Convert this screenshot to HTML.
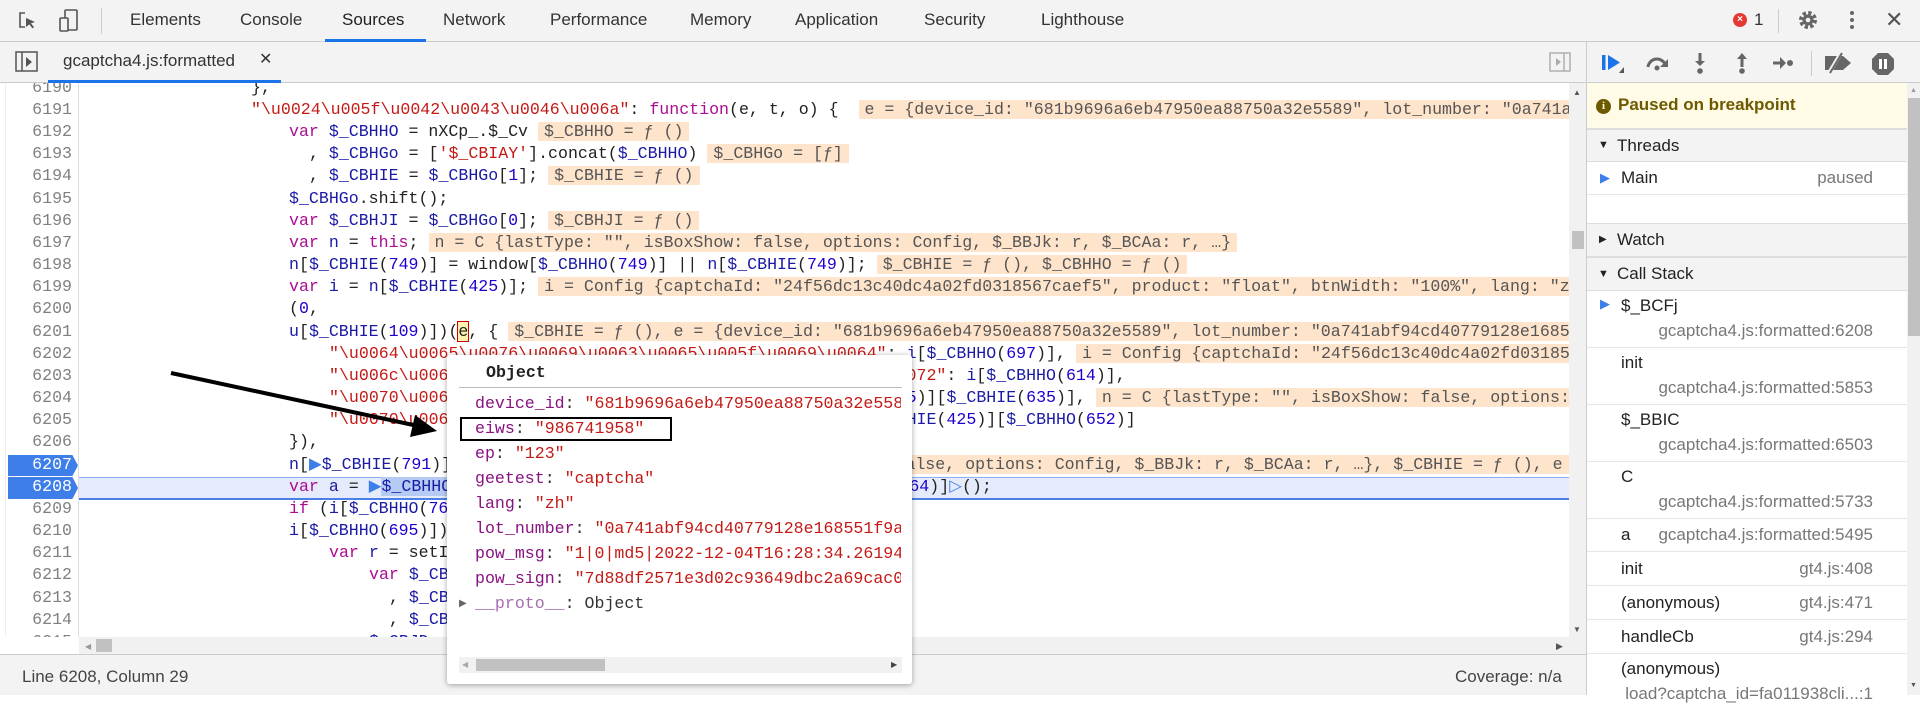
<!DOCTYPE html>
<html><head><meta charset="utf-8">
<style>
*{margin:0;padding:0;box-sizing:border-box}
body{width:1920px;height:695px;overflow:hidden;background:#fff;font-family:"Liberation Sans",sans-serif;position:relative;color:#333}
.abs{position:absolute}
.top{left:0;top:0;width:1920px;height:42px;background:#f3f3f3;border-bottom:1px solid #ccc}
.tab{position:absolute;top:10px;font-size:17px;color:#333}
.ftb{left:0;top:42px;width:1586px;height:41px;background:#f3f3f3;border-bottom:1px solid #ccc}
.mono{font-family:"Liberation Mono",monospace;font-size:16.6px}
.ln{position:absolute;left:0;width:72px;text-align:right;color:#808080;height:22px;line-height:22px}
.cl{position:absolute;white-space:pre;height:22px;line-height:22px;color:#222}
.k{color:#aa0d91}.s{color:#c41a16}.v{color:#1a1aa6}.n{color:#1c00cf}
.iv{background:#ffe4cc;color:#555;padding:0 6px;margin-left:10px}
.side{left:1586px;top:42px;width:334px;height:653px;background:#fff;border-left:1px solid #ccc}
.sh{position:absolute;left:0;width:320px;background:#f3f3f3;border-top:1px solid #ddd;border-bottom:1px solid #ddd;font-size:17px;color:#222;padding-left:30px}
.row{position:absolute;left:0;width:320px;border-bottom:1px solid #e6e6e6;font-size:17px;color:#222}
.sub{color:#777;position:absolute;right:34px}
.pk{color:#881280}.pv{color:#c41a16}
.pr{position:absolute;left:28px;white-space:pre;height:25px;line-height:25px;width:426px;overflow:hidden}
</style></head><body>

<div class="abs top">
 <svg class="abs" style="left:17px;top:10px" width="22" height="22" viewBox="0 0 22 22"><path d="M8 3H3v14h5" fill="none" stroke="#555" stroke-width="1.6"/><path d="M9 8l9 4-4 1.2 3 4-1.6 1.2-3-4L9 17z" fill="#555"/></svg>
 <svg class="abs" style="left:58px;top:8px" width="22" height="26" viewBox="0 0 22 26"><rect x="7" y="2" width="12" height="20" rx="1" fill="none" stroke="#555" stroke-width="1.6"/><rect x="2" y="10" width="8" height="13" rx="1" fill="#f3f3f3" stroke="#555" stroke-width="1.6"/></svg>
 <div class="abs" style="left:101px;top:8px;width:1px;height:26px;background:#ccc"></div>
 <div class="tab" style="left:130px">Elements</div>
 <div class="tab" style="left:240px">Console</div>
 <div class="tab" style="left:342px;color:#222">Sources</div>
 <div class="abs" style="left:325px;top:39px;width:101px;height:3px;background:#1a73e8"></div>
 <div class="tab" style="left:443px">Network</div>
 <div class="tab" style="left:550px">Performance</div>
 <div class="tab" style="left:690px">Memory</div>
 <div class="tab" style="left:795px">Application</div>
 <div class="tab" style="left:924px">Security</div>
 <div class="tab" style="left:1041px">Lighthouse</div>
 <div class="abs" style="left:1733px;top:13px;width:14px;height:14px;border-radius:50%;background:#e53935;color:#fff;font-size:10px;line-height:14px;text-align:center;font-weight:bold">×</div>
 <div class="tab" style="left:1754px">1</div>
 <div class="abs" style="left:1778px;top:9px;width:1px;height:24px;background:#ccc"></div>
 <svg class="abs" style="left:1797px;top:9px" width="22" height="22" viewBox="0 0 22 22"><circle cx="11" cy="11" r="7" fill="none" stroke="#666" stroke-width="4" stroke-dasharray="3.2 2.3"/><circle cx="11" cy="11" r="5.5" fill="#666"/><circle cx="11" cy="11" r="2.3" fill="#f3f3f3"/></svg>
 <div class="abs" style="left:1850px;top:11px;width:4px;height:4px;border-radius:50%;background:#666;box-shadow:0 7px 0 #666,0 14px 0 #666"></div>
 <div class="abs" style="left:1885px;top:7px;font-size:22px;color:#555">✕</div>
</div>

<div class="abs ftb">
 <svg class="abs" style="left:15px;top:9px" width="24" height="22" viewBox="0 0 24 22"><rect x="1" y="1" width="21" height="19" fill="none" stroke="#555" stroke-width="1.5"/><line x1="7" y1="1" x2="7" y2="20" stroke="#555" stroke-width="1.5"/><path d="M11 6l6 5-6 5z" fill="#555"/></svg>
 <div class="abs" style="left:63px;top:9px;font-size:17px;color:#333">gcaptcha4.js:formatted</div>
 <div class="abs" style="left:259px;top:7px;font-size:16px;color:#333">✕</div>
 <div class="abs" style="left:48px;top:38px;width:233px;height:3px;background:#1a73e8"></div>
 <svg class="abs" style="left:1549px;top:10px" width="22" height="20" viewBox="0 0 22 20"><rect x="1" y="1" width="20" height="18" fill="none" stroke="#aaa" stroke-width="1.4"/><line x1="15" y1="1" x2="15" y2="19" stroke="#aaa" stroke-width="1.4"/><path d="M7 6l5 4-5 4z" fill="#aaa"/></svg>
</div>

<div class="abs mono" style="left:0;top:83px;width:1569px;height:554px;overflow:hidden;background:#fff">
 <div class="abs" style="left:78px;top:0;width:1px;height:554px;background:#ddd"></div>
 <div class="abs" style="left:0;top:0;width:6px;height:554px;background:#fff;border-right:1px solid #eee"></div>
 <div class="abs" style="left:79px;top:394px;width:1490px;height:23px;background:#e5ebfb;border-top:1px solid #8ab0f0;border-bottom:2px solid #4a7fe8"></div>
 <div class="abs" style="left:8px;top:372px;width:70px;height:21px;background:#3d7ee8;clip-path:polygon(0 0,92% 0,100% 50%,92% 100%,0 100%)"></div>
 <div class="abs" style="left:8px;top:394px;width:70px;height:22px;background:#3d7ee8;clip-path:polygon(0 0,92% 0,100% 50%,92% 100%,0 100%)"></div>
 <div style="position:absolute;left:0;top:-6.3px">
  <div class="ln" style="top:0">6190</div>
  <div class="ln" style="top:22.17px">6191</div>
  <div class="ln" style="top:44.34px">6192</div>
  <div class="ln" style="top:66.51px">6193</div>
  <div class="ln" style="top:88.68px">6194</div>
  <div class="ln" style="top:110.85px">6195</div>
  <div class="ln" style="top:133.02px">6196</div>
  <div class="ln" style="top:155.19px">6197</div>
  <div class="ln" style="top:177.36px">6198</div>
  <div class="ln" style="top:199.53px">6199</div>
  <div class="ln" style="top:221.7px">6200</div>
  <div class="ln" style="top:243.87px">6201</div>
  <div class="ln" style="top:266.04px">6202</div>
  <div class="ln" style="top:288.21px">6203</div>
  <div class="ln" style="top:310.38px">6204</div>
  <div class="ln" style="top:332.55px">6205</div>
  <div class="ln" style="top:354.72px">6206</div>
  <div class="ln" style="top:376.89px;color:#fff">6207</div>
  <div class="ln" style="top:399.06px;color:#fff">6208</div>
  <div class="ln" style="top:421.23px">6209</div>
  <div class="ln" style="top:443.4px">6210</div>
  <div class="ln" style="top:465.57px">6211</div>
  <div class="ln" style="top:487.74px">6212</div>
  <div class="ln" style="top:509.91px">6213</div>
  <div class="ln" style="top:532.08px">6214</div>
  <div class="ln" style="top:554.25px">6215</div>

  <div class="cl" style="top:0;left:251px">},</div>
  <div class="cl" style="top:22.17px;left:251px"><span class="s">"\u0024\u005f\u0042\u0043\u0046\u006a"</span>: <span class="k">function</span>(e, t, o) { <span class="iv">e = {device_id: "681b9696a6eb47950ea88750a32e5589", lot_number: "0a741abf94cd40779128e168551f9"</span></div>
  <div class="cl" style="top:44.34px;left:289px"><span class="k">var</span> <span class="v">$_CBHHO</span> = nXCp_.$_Cv<span class="iv">$_CBHHO = ƒ ()</span></div>
  <div class="cl" style="top:66.51px;left:309px">, <span class="v">$_CBHGo</span> = [<span class="s">'$_CBIAY'</span>].concat(<span class="v">$_CBHHO</span>)<span class="iv">$_CBHGo = [ƒ]</span></div>
  <div class="cl" style="top:88.68px;left:309px">, <span class="v">$_CBHIE</span> = <span class="v">$_CBHGo</span>[<span class="n">1</span>];<span class="iv">$_CBHIE = ƒ ()</span></div>
  <div class="cl" style="top:110.85px;left:289px"><span class="v">$_CBHGo</span>.shift();</div>
  <div class="cl" style="top:133.02px;left:289px"><span class="k">var</span> <span class="v">$_CBHJI</span> = <span class="v">$_CBHGo</span>[<span class="n">0</span>];<span class="iv">$_CBHJI = ƒ ()</span></div>
  <div class="cl" style="top:155.19px;left:289px"><span class="k">var</span> <span class="v">n</span> = <span class="k">this</span>;<span class="iv">n = C {lastType: "", isBoxShow: false, options: Config, $_BBJk: r, $_BCAa: r, …}</span></div>
  <div class="cl" style="top:177.36px;left:289px"><span class="v">n</span>[<span class="v">$_CBHIE</span>(<span class="n">749</span>)] = window[<span class="v">$_CBHHO</span>(<span class="n">749</span>)] || <span class="v">n</span>[<span class="v">$_CBHIE</span>(<span class="n">749</span>)];<span class="iv">$_CBHIE = ƒ (), $_CBHHO = ƒ ()</span></div>
  <div class="cl" style="top:199.53px;left:289px"><span class="k">var</span> <span class="v">i</span> = <span class="v">n</span>[<span class="v">$_CBHIE</span>(<span class="n">425</span>)];<span class="iv">i = Config {captchaId: "24f56dc13c40dc4a02fd0318567caef5", product: "float", btnWidth: "100%", lang: "zh"</span></div>
  <div class="cl" style="top:221.7px;left:289px">(<span class="n">0</span>,</div>
  <div class="cl" style="top:243.87px;left:289px"><span class="v">u</span>[<span class="v">$_CBHIE</span>(<span class="n">109</span>)])(<span style="background:#fff3b0;outline:1px solid #c00">e</span>, {<span class="iv">$_CBHIE = ƒ (), e = {device_id: "681b9696a6eb47950ea88750a32e5589", lot_number: "0a741abf94cd40779128e168551f9"</span></div>
  <div class="cl" style="top:266.04px;left:329px"><span class="s">"\u0064\u0065\u0076\u0069\u0063\u0065\u005f\u0069\u0064"</span>: <span class="v">i</span>[<span class="v">$_CBHHO</span>(<span class="n">697</span>)],<span class="iv">i = Config {captchaId: "24f56dc13c40dc4a02fd0318567caef5"</span></div>
  <div class="cl" style="top:288.21px;left:329px"><span class="s">"\u006c\u006f\u0074\u005f\u006e\u0075\u006d\u0062\u0065\u0072"</span>: <span class="v">i</span>[<span class="v">$_CBHHO</span>(<span class="n">614</span>)],</div>
  <div class="cl" style="top:310.38px;left:329px"><span class="s">"\u0070\u006f\u0077\u005f\u006d\u0073\u0067"</span>: <span class="v">n</span>[<span class="v">$_CBHIE</span>(<span class="n">425</span>)][<span class="v">$_CBHIE</span>(<span class="n">635</span>)],<span class="iv">n = C {lastType: "", isBoxShow: false, options: Config</span></div>
  <div class="cl" style="top:332.55px;left:329px"><span class="s">"\u0070\u006f\u0077\u005f\u0073\u0069\u0067\u006e"</span>: <span class="v">n</span>[<span class="v">$_CBHIE</span>(<span class="n">425</span>)][<span class="v">$_CBHHO</span>(<span class="n">652</span>)]</div>
  <div class="cl" style="top:354.72px;left:289px">}),</div>
  <div class="cl" style="top:376.89px;left:289px"><span class="v">n</span>[<span style="color:#3d7ee8">▶</span><span class="v">$_CBHIE</span>(<span class="n">791</span>)](<span class="v">i</span>, <span class="v">e</span>);    <span class="iv">n = C {lastType: "", isBoxShow: false, options: Config, $_BBJk: r, $_BCAa: r, …}, $_CBHIE = ƒ (), e = {</span></div>
  <div class="cl" style="top:399.06px;left:289px"><span class="k">var</span> <span class="v">a</span> = <span style="color:#3d7ee8">▶</span><span class="v" style="background:#b6cbf3">$_CBHHO</span>(<span class="n">426</span>)[<span class="v">$_CBHIE</span>(<span class="n">109</span>)](<span class="v">e</span>)[<span class="v">$_CBHIE</span>(<span class="n">425</span>)][<span class="v">$_CBHHO</span>(<span class="n">764</span>)]<span style="color:#3d7ee8">▷</span>();</div>
  <div class="cl" style="top:421.23px;left:289px"><span class="k">if</span> (<span class="v">i</span>[<span class="v">$_CBHHO</span>(<span class="n">768</span>)]) {</div>
  <div class="cl" style="top:443.4px;left:289px"><span class="v">i</span>[<span class="v">$_CBHHO</span>(<span class="n">695</span>)]);</div>
  <div class="cl" style="top:465.57px;left:329px"><span class="k">var</span> <span class="v">r</span> = setInterval(<span class="k">function</span>() {</div>
  <div class="cl" style="top:487.74px;left:369px"><span class="k">var</span> <span class="v">$_CBJA</span></div>
  <div class="cl" style="top:509.91px;left:389px">, <span class="v">$_CBJB</span></div>
  <div class="cl" style="top:532.08px;left:389px">, <span class="v">$_CBJC</span></div>
  <div class="cl" style="top:554.25px;left:369px"><span class="v">$_CBJD</span></div>
 </div>
</div>
<div class="abs" style="left:79px;top:637px;width:1490px;height:17px;background:#f1f1f1"></div>
<div class="abs" style="left:85px;top:642px;font-size:8px;color:#999">◀</div>
<div class="abs" style="left:96px;top:639px;width:16px;height:13px;background:#c1c1c1"></div>
<div class="abs" style="left:1556px;top:641px;font-size:9px;color:#555">▶</div>
<div class="abs" style="left:1569px;top:83px;width:17px;height:571px;background:#f1f1f1"></div>
<div class="abs" style="left:1573px;top:88px;font-size:8px;color:#555">▲</div>
<div class="abs" style="left:1572px;top:231px;width:12px;height:18px;background:#c1c1c1"></div>
<div class="abs" style="left:1573px;top:625px;font-size:8px;color:#555">▼</div>

<div class="abs" style="left:0;top:654px;width:1586px;height:41px;background:#f3f3f3;border-top:1px solid #ccc"></div>
<div class="abs" style="left:22px;top:667px;font-size:17px;color:#444">Line 6208, Column 29</div>
<div class="abs" style="left:1455px;top:667px;font-size:17px;color:#444">Coverage: n/a</div>

<svg class="abs" style="left:0;top:0" width="1920" height="695"><line x1="171" y1="373" x2="418" y2="426" stroke="#000" stroke-width="4"/><path d="M437 431L410 437L415 415Z" fill="#000"/></svg>

<div class="abs mono" style="left:447px;top:355px;width:465px;height:329px;background:#fff;box-shadow:0 1px 6px rgba(0,0,0,.35);border-radius:3px;overflow:hidden">
 <div class="abs" style="left:39px;top:8px;font-weight:bold;color:#222">Object</div>
 <div class="abs" style="left:12px;top:32px;width:443px;height:1px;background:#bbb"></div>
 <div class="pr" style="top:36px"><span class="pk">device_id</span>: <span class="pv">"681b9696a6eb47950ea88750a32e5589"</span></div>
 <div class="pr" style="top:61px"><span class="pk">eiws</span>: <span class="pv">"986741958"</span></div>
 <div class="pr" style="top:86px"><span class="pk">ep</span>: <span class="pv">"123"</span></div>
 <div class="pr" style="top:111px"><span class="pk">geetest</span>: <span class="pv">"captcha"</span></div>
 <div class="pr" style="top:136px"><span class="pk">lang</span>: <span class="pv">"zh"</span></div>
 <div class="pr" style="top:161px"><span class="pk">lot_number</span>: <span class="pv">"0a741abf94cd40779128e168551f9a2b"</span></div>
 <div class="pr" style="top:186px"><span class="pk">pow_msg</span>: <span class="pv">"1|0|md5|2022-12-04T16:28:34.261940+08:00"</span></div>
 <div class="pr" style="top:211px"><span class="pk">pow_sign</span>: <span class="pv">"7d88df2571e3d02c93649dbc2a69cac0"</span></div>
 <div class="pr" style="top:236px"><span style="color:#a56fb0">__proto__</span>: Object</div>
 <div class="abs" style="left:12px;top:243px;font-size:10px;color:#666">▶</div>
 <div class="abs" style="left:13px;top:62px;width:212px;height:24px;border:2px solid #000"></div>
 <div class="abs" style="left:12px;top:302px;width:443px;height:16px;background:#f1f1f1"></div>
 <div class="abs" style="left:15px;top:305px;font-size:8px;color:#aaa">◀</div>
 <div class="abs" style="left:29px;top:304px;width:129px;height:12px;background:#c1c1c1"></div>
 <div class="abs" style="left:444px;top:305px;font-size:8px;color:#444">▶</div>
</div>

<div class="abs side">
 <div class="abs" style="left:0;top:0;width:334px;height:41px;background:#f3f3f3;border-bottom:1px solid #ccc"></div>
 <svg class="abs" style="left:14px;top:10px" width="24" height="22" viewBox="0 0 24 22"><rect x="1" y="3" width="3.5" height="15" fill="#1a73e8"/><path d="M7 3l12 7.5L7 18z" fill="#1a73e8"/><path d="M23 15v6h-5z" fill="#555"/></svg>
 <svg class="abs" style="left:58px;top:12px" width="26" height="18" viewBox="0 0 26 18"><path d="M3 13a9 9 0 0 1 17-3" fill="none" stroke="#666" stroke-width="3"/><path d="M23 5v8h-8z" fill="#666"/><circle cx="12" cy="14" r="2.5" fill="#666"/></svg>
 <svg class="abs" style="left:106px;top:10px" width="14" height="24" viewBox="0 0 14 24"><rect x="5.5" y="1" width="3" height="9" fill="#666"/><path d="M2 9h10l-5 5z" fill="#666"/><circle cx="7" cy="19" r="2.8" fill="#666"/></svg>
 <svg class="abs" style="left:148px;top:10px" width="14" height="24" viewBox="0 0 14 24"><path d="M2 7h10L7 1z" fill="#666"/><rect x="5.5" y="6" width="3" height="9" fill="#666"/><circle cx="7" cy="19" r="2.8" fill="#666"/></svg>
 <svg class="abs" style="left:185px;top:14px" width="24" height="14" viewBox="0 0 24 14"><rect x="1" y="5.5" width="8" height="3" fill="#666"/><path d="M8 1v12l6-6z" fill="#666"/><circle cx="18" cy="7" r="3" fill="#666"/></svg>
 <div class="abs" style="left:224px;top:9px;width:1px;height:25px;background:#ccc"></div>
 <svg class="abs" style="left:236px;top:10px" width="30" height="22" viewBox="0 0 30 22"><path d="M2 4h18l8 7-8 7H2z" fill="#666"/><line x1="6" y1="21" x2="18" y2="1" stroke="#f3f3f3" stroke-width="4"/><line x1="7" y1="21" x2="19" y2="1" stroke="#666" stroke-width="2"/></svg>
 <svg class="abs" style="left:284px;top:10px" width="24" height="24" viewBox="0 0 24 24"><path d="M7 1h10l6 6v10l-6 6H7l-6-6V7z" fill="#666"/><rect x="8" y="7" width="3" height="10" fill="#fff"/><rect x="13" y="7" width="3" height="10" fill="#fff"/></svg>

 <div class="abs" style="left:0;top:41px;width:320px;height:46px;background:#fffbe6;border-bottom:1px solid #ddd"></div>
 <div class="abs" style="left:9px;top:57px;width:15px;height:15px;border-radius:50%;background:#6d5a00;color:#fffbe6;font-size:11px;font-weight:bold;text-align:center;line-height:15px;font-family:'Liberation Serif',serif">i</div>
 <div class="abs" style="left:31px;top:53px;font-size:17px;font-weight:bold;color:#6d5a00">Paused on breakpoint</div>

 <div class="sh" style="top:87px;height:33px;line-height:31px"><span class="abs" style="left:11px;font-size:11px">▼</span>Threads</div>
 <div class="row" style="top:120px;height:33px;line-height:32px;padding-left:34px"><span class="abs" style="left:13px;color:#3d7ee8;font-size:13px">▶</span>Main<span class="sub" style="right:34px;top:0">paused</span></div>
 <div class="sh" style="top:181px;height:34px;line-height:32px"><span class="abs" style="left:12px;font-size:10px">▶</span>Watch</div>
 <div class="sh" style="top:215px;height:34px;line-height:32px"><span class="abs" style="left:11px;font-size:11px">▼</span>Call Stack</div>

 <div class="row" style="top:249px;height:57px;padding-left:34px"><span class="abs" style="left:13px;top:5px;color:#3d7ee8;font-size:13px">▶</span><span class="abs" style="top:5px">$_BCFj</span><span class="sub" style="top:30px">gcaptcha4.js:formatted:6208</span></div>
 <div class="row" style="top:306px;height:57px;padding-left:34px"><span class="abs" style="top:5px">init</span><span class="sub" style="top:30px">gcaptcha4.js:formatted:5853</span></div>
 <div class="row" style="top:363px;height:57px;padding-left:34px"><span class="abs" style="top:5px">$_BBIC</span><span class="sub" style="top:30px">gcaptcha4.js:formatted:6503</span></div>
 <div class="row" style="top:420px;height:57px;padding-left:34px"><span class="abs" style="top:5px">C</span><span class="sub" style="top:30px">gcaptcha4.js:formatted:5733</span></div>
 <div class="row" style="top:477px;height:33px;line-height:32px;padding-left:34px">a<span class="sub" style="top:0">gcaptcha4.js:formatted:5495</span></div>
 <div class="row" style="top:510px;height:34px;line-height:33px;padding-left:34px">init<span class="sub" style="top:0">gt4.js:408</span></div>
 <div class="row" style="top:544px;height:34px;line-height:33px;padding-left:34px">(anonymous)<span class="sub" style="top:0">gt4.js:471</span></div>
 <div class="row" style="top:578px;height:34px;line-height:33px;padding-left:34px">handleCb<span class="sub" style="top:0">gt4.js:294</span></div>
 <div class="row" style="top:612px;height:45px;padding-left:34px;border:none"><span class="abs" style="top:5px">(anonymous)</span><span class="sub" style="top:30px">load?captcha_id=fa011938cli...:1</span></div>

 <div class="abs" style="left:320px;top:41px;width:14px;height:612px;background:#f1f1f1"></div>
 <div class="abs" style="left:323px;top:45px;font-size:7px;color:#999">▲</div>
 <div class="abs" style="left:321px;top:56px;width:12px;height:238px;background:#c1c1c1"></div>
 <div class="abs" style="left:323px;top:640px;font-size:7px;color:#555">▼</div>
</div>
</body></html>
